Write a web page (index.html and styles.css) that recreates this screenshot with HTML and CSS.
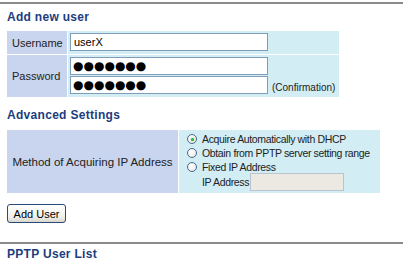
FILE: index.html
```html
<!DOCTYPE html>
<html>
<head>
<meta charset="utf-8">
<link rel="stylesheet" href="styles.css">
</head>
<body>
<div class="rule"></div>
<div class="content">
  <h2 class="title">Add new user</h2>
  <table class="form user-table">
    <tr>
      <td class="label">Username</td>
      <td class="value"><input class="field" type="text" value="userX"></td>
    </tr>
    <tr>
      <td class="label">Password</td>
      <td class="value">
        <div class="pw-row"><input class="field pw" type="text" value="●●●●●●●"></div>
        <div class="pw-row"><input class="field pw" type="text" value="●●●●●●●"><span class="note">(Confirmation)</span></div>
      </td>
    </tr>
  </table>

  <h2 class="title adv">Advanced Settings</h2>
  <table class="form adv-table">
    <tr>
      <td class="label wide">Method of Acquiring IP Address</td>
      <td class="value options">
        <div class="opt"><span class="radio checked"></span>Acquire Automatically with DHCP</div>
        <div class="opt"><span class="radio"></span>Obtain from PPTP server setting range</div>
        <div class="opt"><span class="radio"></span>Fixed IP Address</div>
        <div class="opt ip">IP Address<input class="field ipfield" type="text" disabled></div>
      </td>
    </tr>
  </table>

  <button class="btn" type="button">Add User</button>
</div>
<div class="rule second"></div>
<div class="content">
  <h2 class="title list">PPTP User List</h2>
</div>
</body>
</html>
```

FILE: styles.css
```css
html, body {
  margin: 0;
  padding: 0;
  background: #ffffff;
}
body {
  font-family: "Liberation Sans", Arial, sans-serif;
  font-size: 11px;
  color: #222;
}
.rule {
  height: 2px;
  background: #8a8a8a;
  margin-top: 2px;
}
.rule.second {
  margin-top: 19px;
}
.content {
  padding: 0 7px;
}
.title {
  font-family: "Liberation Sans", Arial, sans-serif;
  font-weight: bold;
  font-size: 12px;
  letter-spacing: 0.3px;
  color: #1c3d7c;
  margin: 6px 0 0 0;
  line-height: 14px;
}
.title.adv {
  margin-top: 10px;
}
.title.list {
  margin-top: 3px;
}
.form {
  border-collapse: separate;
  border-spacing: 1px;
  margin-left: -1px;
}
.user-table {
  margin-top: 6px;
}
.adv-table {
  margin-top: 7px;
  width: 375px;
}
.label {
  background: #c9d5ee;
  padding: 0 0 0 5px;
  width: 55px;
  white-space: nowrap;
}
.label.wide {
  width: 171px;
  text-align: center;
  padding: 0;
  font-size: 11.5px;
}
.value {
  background: #d3edf4;
  padding: 2px 4px 3px 2px;
}
.field {
  display: block;
  box-sizing: border-box;
  width: 198px;
  height: 18px;
  border: 1px solid #7f9db9;
  background: #fff;
  padding: 0 3px;
  margin: 0;
  font-family: "Liberation Sans", Arial, sans-serif;
  font-size: 11px;
  color: #000;
  outline: none;
}
.pw-row {
  display: flex;
  align-items: flex-end;
}
.pw-row + .pw-row {
  margin-top: 1px;
}
.pw {
  font-family: "DejaVu Sans", sans-serif;
  font-size: 12px;
  letter-spacing: 0;
  padding-left: 2px;
}
.note {
  margin-left: 4px;
  line-height: 13px;
  font-size: 10px;
}
.options {
  padding: 2px 4px 2px 8px;
}
.opt {
  display: flex;
  align-items: center;
  height: 14px;
  font-size: 10.5px;
  letter-spacing: -0.35px;
}
.radio {
  box-sizing: border-box;
  width: 10px;
  height: 10px;
  border-radius: 50%;
  border: 1px solid #4a6a8c;
  background: radial-gradient(circle at 40% 40%, #ffffff 0%, #eef0f0 60%, #d4d8d8 100%);
  margin-right: 5px;
  position: relative;
  flex: none;
}
.radio.checked::after {
  content: "";
  position: absolute;
  left: 2.5px;
  top: 2.5px;
  width: 3px;
  height: 3px;
  border-radius: 50%;
  background: #33bb33;
  box-shadow: 0 0 1px #2a9a2a;
}
.opt.ip {
  height: 18px;
  margin-top: -1px;
  padding-left: 15px;
}
.ipfield {
  width: 94px;
  margin-left: 1px;
  background: #ece9e2;
  border-color: #b9c4cf;
}
.btn {
  display: block;
  margin-top: 10px;
  width: 59px;
  height: 19px;
  padding: 0;
  border: 1px solid #2b4a78;
  border-radius: 3px;
  background: linear-gradient(#ffffff, #f0f0ea 70%, #d8d6cc);
  font-family: "Liberation Sans", Tahoma, sans-serif;
  font-size: 11px;
  color: #000;
}
```
